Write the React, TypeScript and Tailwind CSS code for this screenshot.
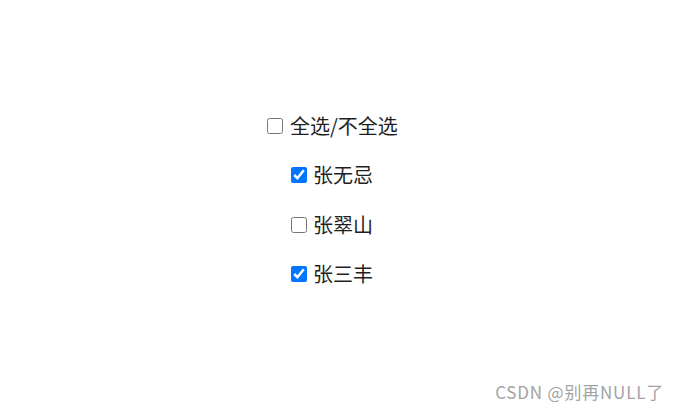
import React, { useState } from "react";

const names = ["张无忌", "张翠山", "张三丰"];

export default function App() {
  const [checked, setChecked] = useState<boolean[]>([true, false, true]);
  const all = checked.every(Boolean);
  const font = { fontFamily: '"Microsoft YaHei", "Noto Sans CJK SC", "Noto Sans", sans-serif' };
  return (
    <div className="relative h-[411px] w-full bg-white text-[#1f1f1f]" style={font}>
      <div className="flex flex-col pt-[101px]">
        <label className="flex h-[49.5px] items-center pl-[267px] text-[20px]">
          <input
            type="checkbox"
            className="m-0 h-4 w-4"
            checked={all}
            onChange={(e) => setChecked(checked.map(() => e.target.checked))}
          />
          <span className="ml-[7px] leading-none">全选/不全选</span>
        </label>
        {names.map((n, i) => (
          <label key={n} className="flex h-[49.5px] items-center pl-[291px] text-[20px]">
            <input
              type="checkbox"
              className="m-0 h-4 w-4"
              checked={checked[i]}
              onChange={(e) => {
                const c = [...checked];
                c[i] = e.target.checked;
                setChecked(c);
              }}
            />
            <span className="ml-[6px] leading-none">{n}</span>
          </label>
        ))}
      </div>
      <div
        className="absolute bottom-[7px] right-[14px] text-[17px] tracking-[0.8px] text-[#a3a3a3]"
        style={font}
      >
        CSDN @别再NULL了
      </div>
    </div>
  );
}
